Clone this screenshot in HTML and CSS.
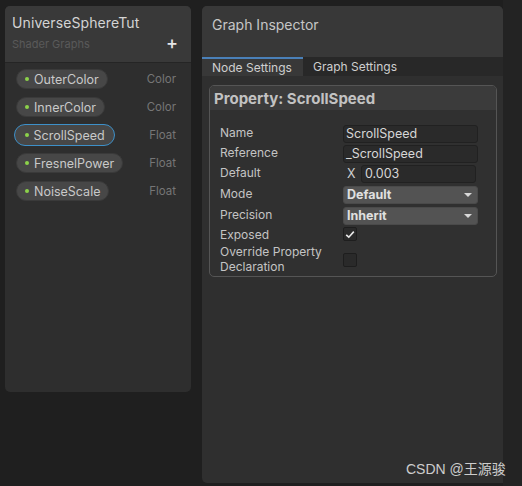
FILE: index.html
```html
<!DOCTYPE html>
<html>
<head>
<meta charset="utf-8">
<link rel="stylesheet" href="styles.css">
</head>
<body>
<div class="page">
  <div class="blackboard">
    <div class="bb-header">
      <div class="bb-title">UniverseSphereTut</div>
      <div class="bb-sub">
        <span>Shader Graphs</span>
        <span class="plus">+</span>
      </div>
    </div>
    <div class="bb-body">
      <div class="prop-row"><span class="pill"><i class="dot"></i>OuterColor</span><span class="ptype">Color</span></div>
      <div class="prop-row"><span class="pill"><i class="dot"></i>InnerColor</span><span class="ptype">Color</span></div>
      <div class="prop-row"><span class="pill selected"><i class="dot"></i>ScrollSpeed</span><span class="ptype">Float</span></div>
      <div class="prop-row"><span class="pill"><i class="dot"></i>FresnelPower</span><span class="ptype">Float</span></div>
      <div class="prop-row"><span class="pill"><i class="dot"></i>NoiseScale</span><span class="ptype">Float</span></div>
    </div>
  </div>

  <div class="inspector">
    <div class="insp-header">Graph Inspector</div>
    <div class="tabs">
      <div class="tab active">Node Settings</div>
      <div class="tab">Graph Settings</div>
    </div>
    <div class="insp-body">
      <div class="propbox">
        <div class="propbox-title">Property: ScrollSpeed</div>
        <div class="fields">
          <div class="frow r20"><span class="flabel">Name</span><span class="input">ScrollSpeed</span></div>
          <div class="frow r20"><span class="flabel">Reference</span><span class="input">_ScrollSpeed</span></div>
          <div class="frow r21"><span class="flabel">Default</span><span class="xval"><span class="xlabel">X</span><span class="input grow">0.003</span></span></div>
          <div class="frow r21"><span class="flabel">Mode</span><span class="dropdown">Default<i class="arrow"></i></span></div>
          <div class="frow r20"><span class="flabel">Precision</span><span class="dropdown">Inherit<i class="arrow"></i></span></div>
          <div class="frow r17"><span class="flabel">Exposed</span><span class="check">
            <svg width="10" height="9" viewBox="0 0 10 9"><path d="M1.2 4.8 L3.8 7.2 L8.8 1.6" fill="none" stroke="#e8e8e8" stroke-width="1.6"/></svg>
          </span></div>
          <div class="frow tall"><span class="flabel two">Override Property<br>Declaration</span><span class="check empty"></span></div>
        </div>
      </div>
    </div>
  </div>
  <div class="right-strip"></div>
  <div class="watermark">CSDN @王源骏</div>
</div>
</body>
</html>
```

FILE: styles.css
```css
* { box-sizing: border-box; }
html, body {
  margin: 0;
  padding: 0;
  background: #1f1f1f;
  font-family: Inter, "Noto Sans", "Noto Sans CJK SC", sans-serif;
}
.page {
  position: relative;
  width: 522px;
  height: 486px;
  display: flex;
  align-items: flex-start;
  padding-top: 6px;
  padding-left: 5px;
  overflow: hidden;
}

/* Blackboard */
.blackboard {
  width: 186px;
  height: 386px;
  background: #2e2e2e;
  border-radius: 5px;
  overflow: hidden;
  display: flex;
  flex-direction: column;
}
.bb-header {
  height: 57px;
  background: #393939;
  padding: 8px 7px 0 7px;
  border-bottom: 1px solid #252525;
}
.bb-title {
  color: #d4d4d4;
  font-size: 14px;
  line-height: 17px;
  letter-spacing: 0.1px;
}
.bb-sub {
  display: flex;
  justify-content: space-between;
  align-items: center;
  margin-top: 6px;
  color: #5a5a5a;
  font-size: 11px;
  line-height: 14px;
}
.plus {
  color: #e6e6e6;
  font-size: 18px;
  font-weight: 500;
  line-height: 14px;
  margin-right: 6px;
  margin-top: -2px;
}
.bb-body {
  padding: 6px 15px 0 11px;
  display: flex;
  flex-direction: column;
  gap: 8px;
}
.prop-row {
  height: 20px;
  display: flex;
  align-items: center;
  justify-content: space-between;
}
.pill {
  height: 20px;
  display: inline-flex;
  align-items: center;
  padding: 0 8px 0 8px;
  background: #474747;
  border: 1px solid #3a3a3a;
  border-radius: 10px;
  color: #c9c9c9;
  font-size: 12.5px;
}
.pill.selected {
  border: 1.5px solid #3d90c9;
  margin-left: -2px;
  padding-left: 9.5px;
  padding-right: 9px;
  height: 22px;
  border-radius: 11px;
}
.dot {
  width: 4px;
  height: 4px;
  border-radius: 50%;
  background: #8cd24a;
  margin-right: 5px;
}
.ptype {
  color: #767676;
  font-size: 11.5px;
}

/* Inspector */
.inspector {
  margin-left: 11px;
  width: 301px;
  height: 477px;
  background: #2f2f2f;
  border-radius: 5px 5px 0 5px;
  overflow: hidden;
  display: flex;
  flex-direction: column;
}
.insp-header {
  height: 51px;
  background: #383838;
  color: #c6c6c6;
  font-size: 14px;
  padding: 10px 0 0 10px;
}
.tabs {
  height: 19px;
  display: flex;
  background: #282828;
}
.tab {
  color: #cfcfcf;
  font-size: 12px;
  line-height: 19px;
  padding: 0 10px;
}
.tab.active {
  width: 101px;
  background: #383838;
  border-top: 2px solid #4a80b8;
  line-height: 17px;
}
.insp-body {
  padding: 9px 6px 0 7px;
}
.propbox {
  border: 1px solid #555555;
  border-radius: 5px;
  background: #303030;
  height: 192px;
  overflow: hidden;
}
.propbox-title {
  height: 24px;
  background: #3b3b3b;
  color: #c2c2c2;
  font-size: 15px;
  font-weight: 700;
  padding: 4px 0 0 4px;
  line-height: 18px;
}
.fields {
  padding: 15px 18px 0 10px;
  display: flex;
  flex-direction: column;
}
.frow {
  display: flex;
  align-items: flex-start;
}
.frow.r20 { height: 20px; }
.frow.r21 { height: 21px; }
.frow.r17 { height: 17px; }
.frow.tall { height: 34px; }
.flabel {
  width: 123px;
  flex: none;
  color: #c4c4c4;
  font-size: 12px;
  line-height: 15px;
}
.input {
  flex: 1;
  height: 18px;
  background: #2a2a2a;
  border: 1px solid #212121;
  border-radius: 3px;
  color: #d6d6d6;
  font-size: 12.5px;
  line-height: 16px;
  padding-left: 2px;
}
.xval {
  flex: 1;
  display: flex;
  align-items: flex-start;
  padding-right: 2px;
}
.xlabel {
  width: 18px;
  color: #d0d0d0;
  font-size: 12.5px;
  line-height: 17px;
  padding-left: 4px;
}
.input.grow { padding-left: 3px; }
.dropdown {
  flex: 1;
  height: 18px;
  background: #535353;
  border: 1px solid #4a4a4a;
  border-radius: 3px;
  color: #e0e0e0;
  font-size: 12.5px;
  font-weight: 700;
  line-height: 16px;
  padding-left: 3px;
  display: flex;
  align-items: center;
  justify-content: space-between;
  padding-right: 5px;
}
.arrow {
  width: 0;
  height: 0;
  border-left: 4px solid transparent;
  border-right: 4px solid transparent;
  border-top: 4px solid #d8d8d8;
}
.check {
  width: 14px;
  height: 14px;
  background: #2a2a2a;
  border: 1px solid #1e1e1e;
  border-radius: 2px;
  display: flex;
  align-items: center;
  justify-content: center;
}
.check.empty { margin-top: 9px; }
.watermark {
  position: absolute;
  left: 406px;
  top: 458px;
  color: rgba(235, 235, 235, 0.85);
  font-size: 14px;
  font-family: "Liberation Sans", "Noto Sans CJK SC", sans-serif;
  white-space: nowrap;
}
.right-strip {
  flex: 1;
  align-self: stretch;
  margin-top: -6px;
  background: #232323;
}
```
